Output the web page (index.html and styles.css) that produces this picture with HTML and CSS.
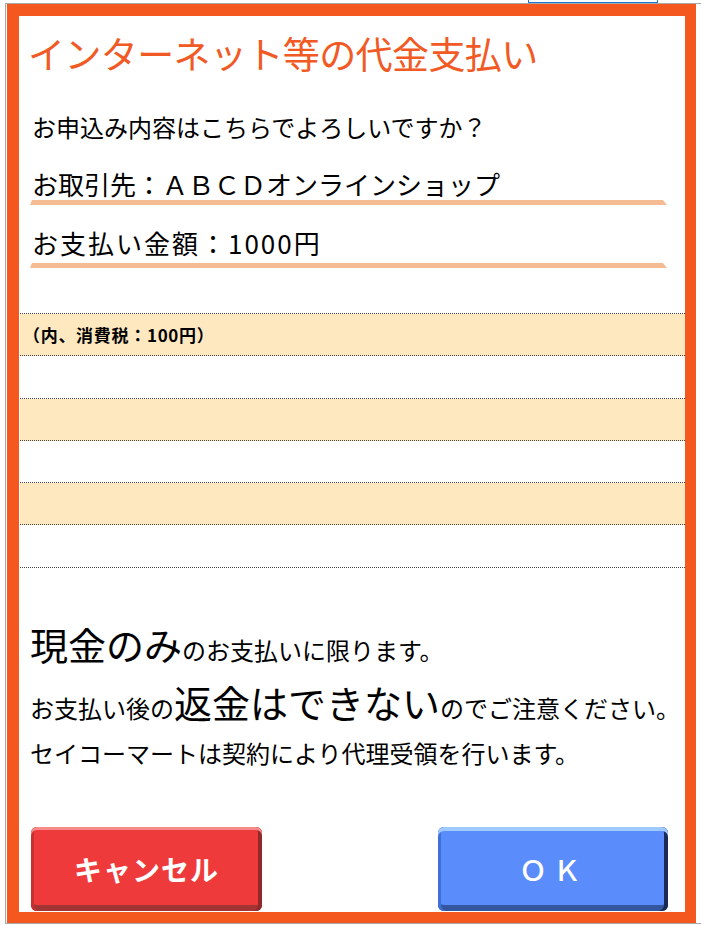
FILE: index.html
```html
<!DOCTYPE html>
<html lang="ja">
<head>
<meta charset="utf-8">
<title>インターネット等の代金支払い</title>
<link rel="stylesheet" href="styles.css">
</head>
<body>
<div class="topbar"><div class="tab"></div></div>
<div class="window">
  <div class="frame">
    <h1 class="title">インターネット等の代金支払い</h1>
    <p class="question">お申込み内容はこちらでよろしいですか？</p>
    <div class="field">
      <p class="field-text">お取引先：ＡＢＣＤオンラインショップ</p>
      <div class="underline"></div>
    </div>
    <div class="field">
      <p class="field-text wide">お支払い金額：1000円</p>
      <div class="underline"></div>
    </div>
    <div class="rows">
      <div class="row peach"><span class="tax">（内、消費税：100円）</span></div>
      <div class="row"></div>
      <div class="row peach"></div>
      <div class="row"></div>
      <div class="row peach"></div>
      <div class="row"></div>
    </div>
    <div class="notes">
      <p class="note"><span class="big">現金のみ</span><span class="small">のお支払いに限ります。</span></p>
      <p class="note"><span class="small">お支払い後の</span><span class="big">返金はできない</span><span class="small">のでご注意ください。</span></p>
      <p class="note plain">セイコーマートは契約により代理受領を行います。</p>
    </div>
    <div class="buttons">
      <button class="btn btn-cancel" type="button">キャンセル</button>
      <button class="btn btn-ok" type="button">ＯＫ</button>
    </div>
  </div>
</div>
</body>
</html>
```

FILE: styles.css
```css
html, body {
  margin: 0;
  padding: 0;
  background: #ffffff;
}

body {
  font-family: "Noto Sans CJK JP", "Noto Sans", sans-serif;
  color: #000000;
  width: 704px;
  height: 925px;
  overflow: hidden;
}

.topbar {
  height: 3px;
}

.tab {
  margin-left: 528px;
  width: 128px;
  height: 2px;
  border: 1px solid #1a78d6;
  border-top: none;
  background: #ffffff;
}

.window {
  margin-left: 5px;
  width: 696px;
  height: 921px;
  border-top: 1px solid #a8a8a8;
  border-left: 1px solid #a8a8a8;
  border-bottom: 1px solid #a8a8a8;
  box-sizing: border-box;
  padding-left: 1px;
}

.frame {
  width: 666px;
  height: 896px;
  border: 12px solid #f4581f;
  border-bottom-width: 11px;
  border-right-width: 11px;
  background: #ffffff;
  display: flex;
  flex-direction: column;
  overflow: hidden;
}

.title {
  margin: 13px 0 0 9px;
  font-size: 37px;
  font-weight: normal;
  line-height: 48px;
  color: #f15a24;
  letter-spacing: -0.6px;
  white-space: nowrap;
}

.question {
  margin: 34px 0 0 13px;
  font-size: 24px;
  line-height: 32px;
}

.field {
  margin-top: 25px;
}

.field + .field {
  margin-top: 22px;
}

.field + .field .underline {
  margin-top: 4px;
}

.field-text {
  margin: 0 0 0 13px;
  font-size: 26px;
  line-height: 32px;
  white-space: nowrap;
}

.field-text.wide {
  letter-spacing: 2px;
}

.underline {
  margin: 0 0 0 11px;
  width: 637px;
  height: 5px;
  background: #f5bc94;
  clip-path: polygon(2px 0, calc(100% - 4px) 0, 100% 100%, 0 100%);
}

.rows {
  margin: 45px 0 0 1px;
  border-top: 1px dotted #444444;
}

.row {
  height: 41.3px;
  border-bottom: 1px dotted #444444;
  display: flex;
  align-items: center;
}

.row.peach {
  background: #fee8c0;
}

.tax {
  margin-left: 3px;
  font-size: 17px;
  font-weight: bold;
  letter-spacing: 0.7px;
}

.notes {
  margin: 53px 0 0 11px;
}

.note {
  margin: 0;
  white-space: nowrap;
  font-size: 24px;
  line-height: 58px;
}

.note.plain {
  line-height: 32px;
}

.big {
  font-size: 38px;
  line-height: 38px;
}

.small {
  font-size: 24px;
  line-height: 24px;
}

.buttons {
  margin-top: auto;
  display: flex;
  justify-content: space-between;
  padding: 0 17px 1px 12px;
}

.btn {
  width: 231px;
  height: 84px;
  border: none;
  border-radius: 6px;
  font-family: "Noto Sans CJK JP", "Noto Sans", sans-serif;
  font-weight: bold;
  font-size: 28px;
  color: #ffffff;
  padding: 0;
}

.btn-cancel {
  background: #ef3a3c;
  box-shadow:
    inset 0 3px 0 #f98a8a,
    inset 3px 0 0 #c9302f,
    inset -4px 0 0 #8e2a2a,
    inset 0 -6px 0 #a33434;
  letter-spacing: 1px;
}

.btn-ok {
  width: 230px;
  background: #5a8cfc;
  box-shadow:
    inset 0 4px 0 #9fcaff,
    inset 3px 0 0 #3f6fd9,
    inset -4px 0 0 #1b2a55,
    inset 0 -6px 0 #34569f;
  letter-spacing: 6px;
  font-weight: 500;
}
```
